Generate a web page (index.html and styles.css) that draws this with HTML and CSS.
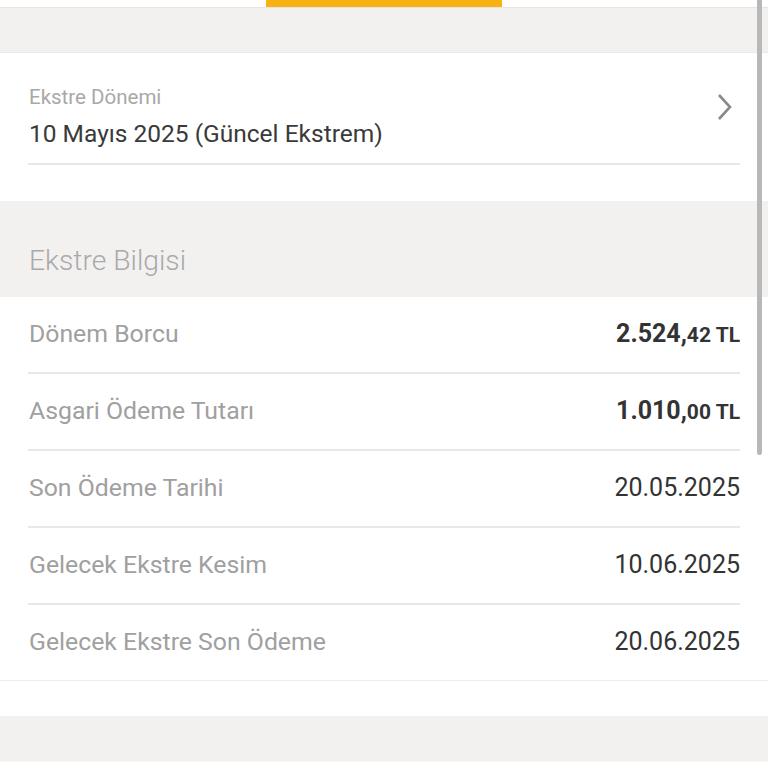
FILE: index.html
```html
<!DOCTYPE html>
<html lang="tr">
<head>
    <meta charset="UTF-8">
    <meta name="viewport" content="width=device-width, initial-scale=1.0">
    <title>Ekstre</title>
    <link rel="stylesheet" href="styles.css">
</head>
<body>
    <div class="tabs">
        <div class="tab-indicator"></div>
    </div>

    <div class="band band-top"></div>

    <section class="period">
        <div class="period-row">
            <div class="period-text">
                <span class="period-label">Ekstre Dönemi</span>
                <span class="period-value">10 Mayıs 2025 (Güncel Ekstrem)</span>
            </div>
            <svg class="chevron" width="18" height="28" viewBox="0 0 18 28">
                <path d="M3 2 L14 14 L3 26" fill="none" stroke="#8a8a8a" stroke-width="2.6"/>
            </svg>
        </div>
    </section>

    <div class="band band-title">
        <h2>Ekstre Bilgisi</h2>
    </div>

    <section class="info">
        <div class="info-row">
            <span class="info-label">Dönem Borcu</span>
            <span class="amount">2.524,<small>42 TL</small></span>
        </div>
        <div class="info-row">
            <span class="info-label">Asgari Ödeme Tutarı</span>
            <span class="amount">1.010,<small>00 TL</small></span>
        </div>
        <div class="info-row">
            <span class="info-label">Son Ödeme Tarihi</span>
            <span class="info-value">20.05.2025</span>
        </div>
        <div class="info-row">
            <span class="info-label">Gelecek Ekstre Kesim</span>
            <span class="info-value">10.06.2025</span>
        </div>
        <div class="info-row">
            <span class="info-label">Gelecek Ekstre Son Ödeme</span>
            <span class="info-value">20.06.2025</span>
        </div>
    </section>

    <div class="spacer"></div>
    <div class="band band-bottom"></div>

    <div class="scrollbar"></div>
</body>
</html>
```

FILE: styles.css
```css
body {
    margin: 0;
    background-color: #fff;
    font-family: Roboto, 'Noto Sans', sans-serif;
    overflow: hidden;
    height: 768px;
}

.tabs {
    height: 7px;
    background-color: #fff;
    border-bottom: 1px solid #e6e5e3;
    padding-left: 266px;
}

.tab-indicator {
    width: 236px;
    height: 7px;
    background-color: #f7b211;
}

.band {
    background-color: #f2f1f0;
}

.band-top {
    height: 44px;
    border-bottom: 1px solid #ebeae8;
}

.period {
    height: 148px;
    padding: 0 28px;
}

.period-row {
    display: flex;
    align-items: center;
    justify-content: space-between;
    height: 110px;
    border-bottom: 2px solid #e8e8e8;
    padding-left: 1px;
}

.period-text {
    display: flex;
    flex-direction: column;
    align-self: flex-start;
    padding-top: 31px;
}

.period-label {
    font-size: 20.5px;
    color: #a8a8a8;
    line-height: 26px;
}

.period-value {
    font-size: 24.5px;
    color: #3a3a3a;
    line-height: 32px;
    margin-top: 8px;
}

.chevron {
    margin-right: 6px;
    margin-bottom: 2px;
}

.band-title {
    height: 96px;
    display: flex;
    align-items: center;
}

.band-title h2 {
    margin: 22px 0 0 29px;
    font-size: 28.3px;
    font-weight: 300;
    color: #a9a9a9;
}

.info {
    padding: 0 28px;
    border-bottom: 1px solid #ececec;
}

.info-row {
    display: flex;
    justify-content: space-between;
    align-items: center;
    height: 75px;
    border-bottom: 2px solid #e8e8e8;
    padding-left: 1px;
}

.info-row:last-child {
    border-bottom: none;
}

.info-label {
    font-size: 24.8px;
    color: #a0a0a0;
    padding-bottom: 3px;
}

.info-value {
    font-size: 25px;
    color: #333;
    padding-bottom: 3px;
}

.amount {
    font-size: 25px;
    font-weight: 700;
    color: #333;
    padding-bottom: 3px;
}

.amount small {
    font-size: 21px;
}

.spacer {
    height: 35px;
}

.band-bottom {
    height: 45px;
    border-bottom: 1px solid #f6f6f4;
}

.scrollbar {
    position: absolute;
    top: 0;
    left: 757px;
    width: 5px;
    height: 455px;
    background-color: #b8b8b8;
    border-radius: 0 0 3px 3px;
}
```
